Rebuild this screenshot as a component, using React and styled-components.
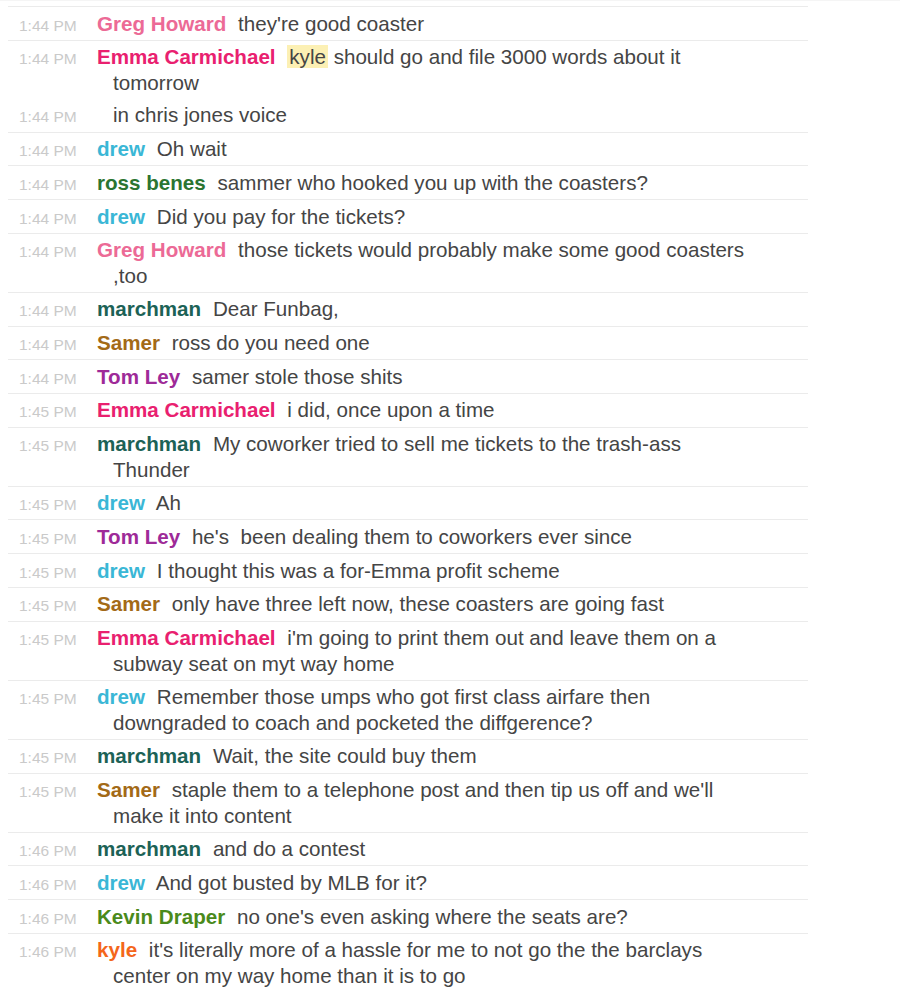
import React from "react";
import styled, { createGlobalStyle } from "styled-components";

const Global = createGlobalStyle`
  html, body { margin: 0; padding: 0; background: #fff; }
  body { font-family: "Liberation Sans", Arial, Helvetica, sans-serif; }
`;

const C = {
  greg: "#ec6a96",
  emma: "#e9206f",
  drew: "#3ab7d6",
  ross: "#2b7531",
  marchman: "#1c6256",
  samer: "#a36a17",
  tom: "#9e2a98",
  kevin: "#4a8a1b",
  kyle: "#f4661b",
};

const messages = [
  { t: "1:44 PM", n: "Greg Howard", c: C.greg, m: ["they're good coaster"] },
  {
    t: "1:44 PM",
    n: "Emma Carmichael",
    c: C.emma,
    m: [[{ hl: "kyle" }, " should go and file 3000 words about it tomorrow"], ["in chris jones voice"]],
  },
  { t: "1:44 PM", n: "drew", c: C.drew, m: ["Oh wait"] },
  { t: "1:44 PM", n: "ross benes", c: C.ross, m: ["sammer who hooked you up with the coasters?"] },
  { t: "1:44 PM", n: "drew", c: C.drew, m: ["Did you pay for the tickets?"] },
  { t: "1:44 PM", n: "Greg Howard", c: C.greg, m: ["those tickets would probably make some good coasters ,too"] },
  { t: "1:44 PM", n: "marchman", c: C.marchman, m: ["Dear Funbag,"] },
  { t: "1:44 PM", n: "Samer", c: C.samer, m: ["ross do you need one"] },
  { t: "1:44 PM", n: "Tom Ley", c: C.tom, m: ["samer stole those shits"] },
  { t: "1:45 PM", n: "Emma Carmichael", c: C.emma, m: ["i did, once upon a time"] },
  { t: "1:45 PM", n: "marchman", c: C.marchman, m: ["My coworker tried to sell me tickets to the trash-ass Thunder"] },
  { t: "1:45 PM", n: "drew", c: C.drew, m: ["Ah"] },
  { t: "1:45 PM", n: "Tom Ley", c: C.tom, m: ["he's\u00a0 been dealing them to coworkers ever since"] },
  { t: "1:45 PM", n: "drew", c: C.drew, m: ["I thought this was a for-Emma profit scheme"] },
  { t: "1:45 PM", n: "Samer", c: C.samer, m: ["only have three left now, these coasters are going fast"] },
  { t: "1:45 PM", n: "Emma Carmichael", c: C.emma, m: ["i'm going to print them out and leave them on a subway seat on myt way home"] },
  {
    t: "1:45 PM",
    n: "drew",
    c: C.drew,
    m: ["Remember those umps who got first class airfare then downgraded to coach and pocketed the diffgerence?"],
  },
  { t: "1:45 PM", n: "marchman", c: C.marchman, m: ["Wait, the site could buy them"] },
  {
    t: "1:45 PM",
    n: "Samer",
    c: C.samer,
    m: ["staple them to a telephone post and then tip us off and we'll make it into content"],
  },
  { t: "1:46 PM", n: "marchman", c: C.marchman, m: ["and do a contest"] },
  { t: "1:46 PM", n: "drew", c: C.drew, m: ["And got busted by MLB for it?"] },
  { t: "1:46 PM", n: "Kevin Draper", c: C.kevin, m: ["no one's even asking where the seats are?"] },
  {
    t: "1:46 PM",
    n: "kyle",
    c: C.kyle,
    m: ["it's literally more of a hassle for me to not go the the barclays center on my way home than it is to go"],
  },
];

const Page = styled.div`
  padding-top: 5px;
  border-top: 1px solid #f5f5f5;
`;

const Log = styled.div`
  margin-left: 8px;
  width: 800px;
`;

const Group = styled.div`
  border-top: 1px solid #ebebeb;
`;

const Line = styled.div`
  display: flex;
  align-items: baseline;
  padding: 3.6px 0;
`;

const Time = styled.span`
  flex: 0 0 78px;
  padding-left: 11px;
  font-size: 15.5px;
  color: #cacaca;
  white-space: nowrap;
`;

const Body = styled.div`
  flex: 0 0 643px;
  padding-left: 16px;
  text-indent: ${(p) => (p.$cont ? "0" : "-16px")};
  font-size: 20.6px;
  line-height: 25.5px;
  color: #454545;
`;

const Name = styled.span`
  font-weight: bold;
  color: ${(p) => p.$color};
  margin-right: 6px;
`;

const Mention = styled.span`
  background: #fcf0b4;
  padding: 0 2px;
`;

function renderText(parts) {
  const arr = Array.isArray(parts) ? parts : [parts];
  return arr.map((p, i) =>
    typeof p === "string" ? <React.Fragment key={i}>{p}</React.Fragment> : <Mention key={i}>{p.hl}</Mention>
  );
}

export default function App() {
  return (
    <>
      <Global />
      <Page>
        <Log>
          {messages.map((g, gi) => (
            <Group key={gi}>
              {g.m.map((text, mi) => (
                <Line key={mi}>
                  <Time>{g.t}</Time>
                  <Body $cont={mi > 0}>
                    {mi === 0 && <Name $color={g.c}>{g.n}</Name>}
                    {mi === 0 ? " " : null}
                    {renderText(text)}
                  </Body>
                </Line>
              ))}
            </Group>
          ))}
        </Log>
      </Page>
    </>
  );
}
